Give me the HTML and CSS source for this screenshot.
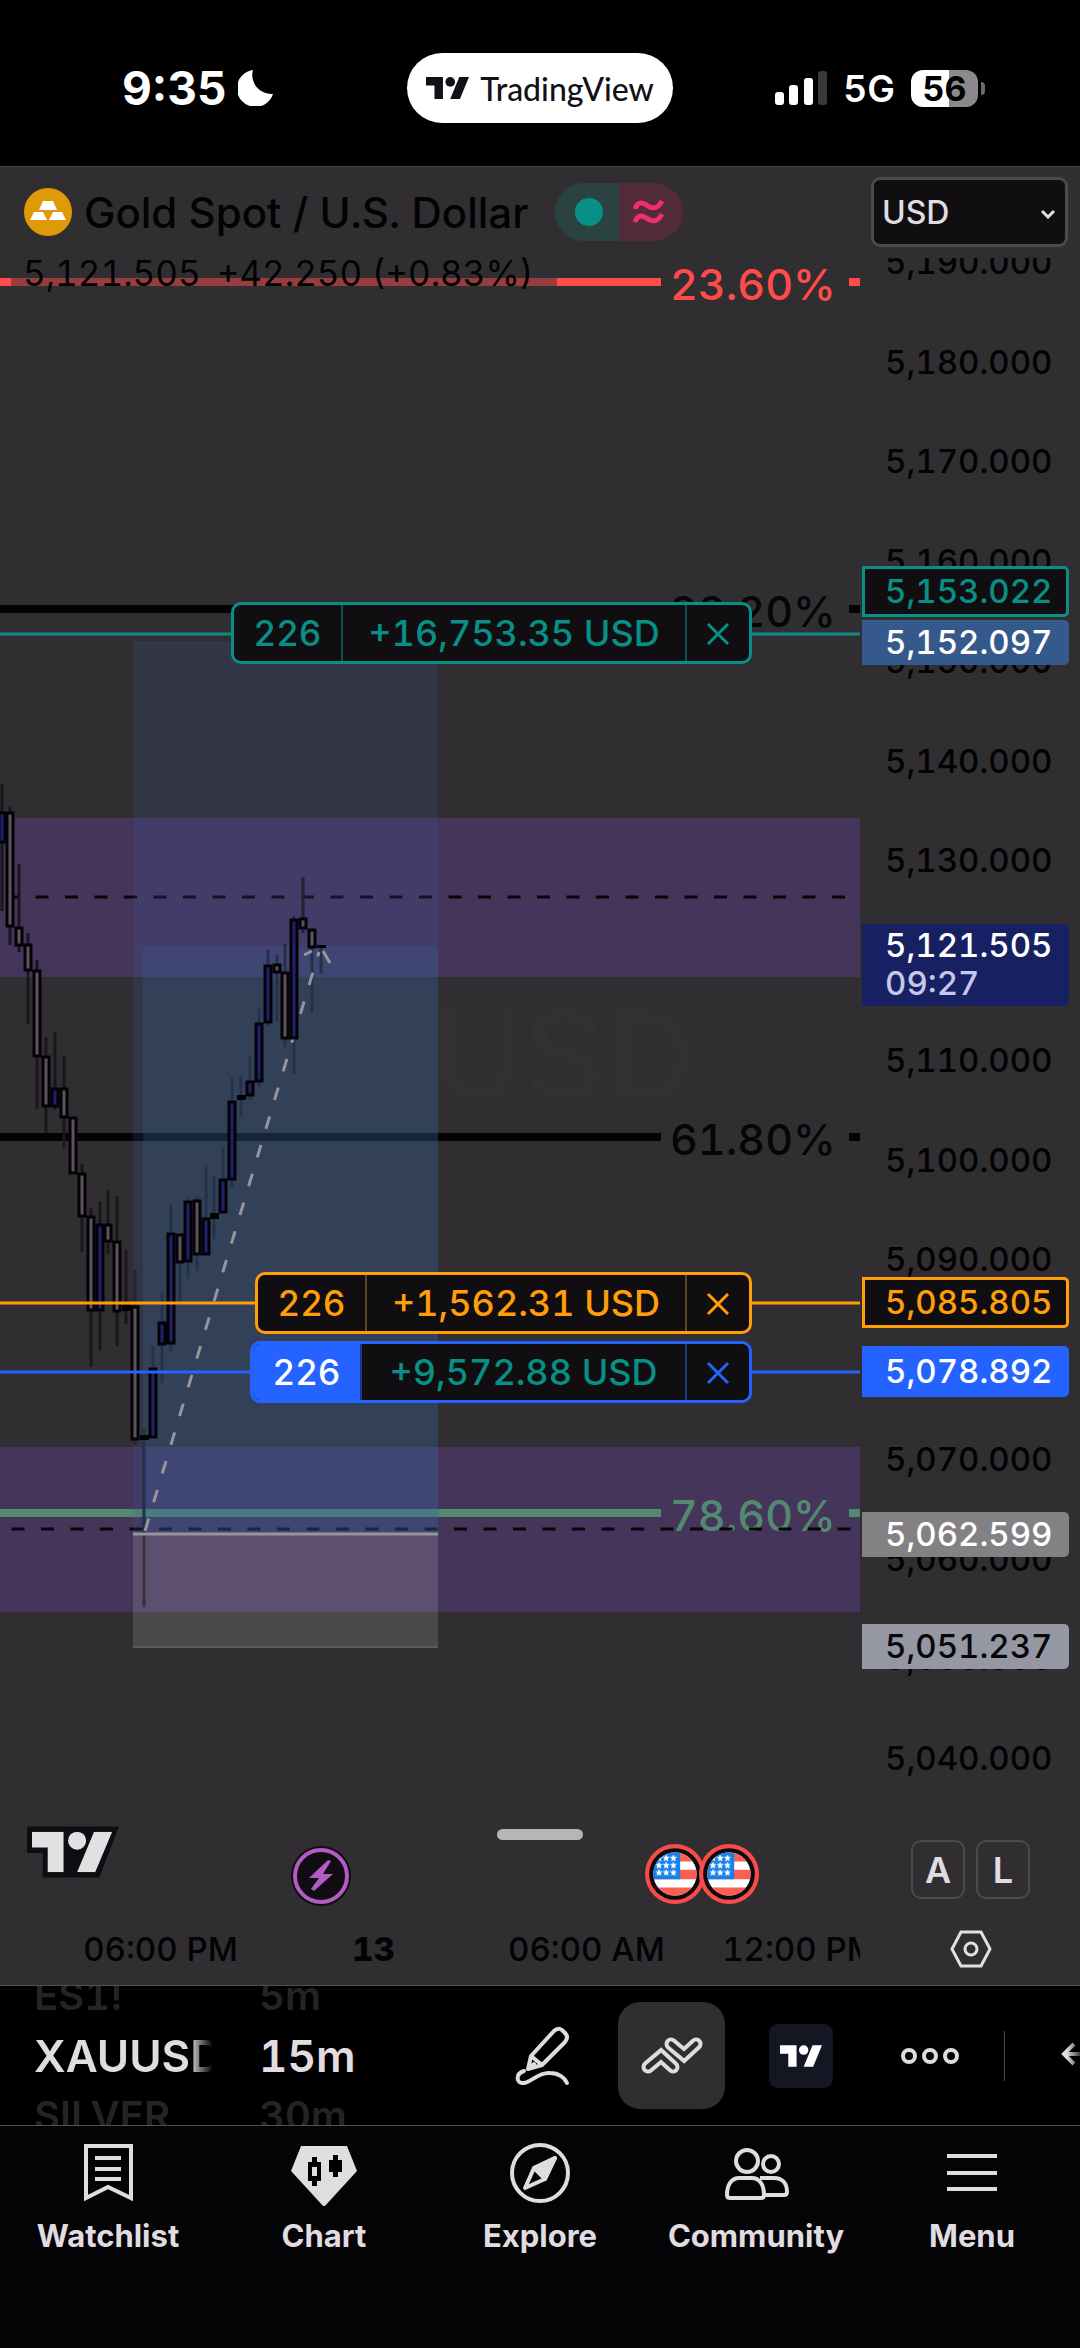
FILE: index.html
```
<!DOCTYPE html>
<html lang="en">
<head>
    <meta charset="utf-8">
    <meta name="viewport" content="width=device-width, initial-scale=1">
    <title>XAUUSD 15m</title>
    <link rel="stylesheet" href="styles.css">
</head>
<body>
    <!-- shared symbols -->
    <svg class="defs" aria-hidden="true">
        <symbol id="tv" viewBox="0 4 35.5 18">
            <path d="M14 22H7V11H0V4h14v18zM28 22h-8l7.5-18h8L28 22z"/>
            <circle cx="20" cy="8" r="4"/>
        </symbol>
        <pattern id="stars" x="10" y="10" width="7" height="7" patternUnits="userSpaceOnUse">
            <path fill="#fff" d="M3.500 0l1 2.300 2.500.200-1.900 1.700.600 2.500-2.200-1.300L1.300 6.700l.600-2.500L0 2.500l2.500-.200z"/>
        </pattern>
        <symbol id="flag" viewBox="0 0 58 58">
            <circle cx="29" cy="29" r="29" fill="#f94c48"/>
            <circle cx="29" cy="29" r="25" fill="#0d0b0f"/>
            <clipPath id="flagClip"><circle cx="29" cy="29" r="21"/></clipPath>
            <g clip-path="url(#flagClip)">
                <path fill="#fff" d="M8 8h42v42H8z"/>
                <path fill="#fb5f52" d="M8 8h42v9H8zM8 25h42v9H8zM8 42h42v9H8z"/>
                <path fill="#1580ee" d="M8 8h26v26H8z"/>
                <path fill="url(#stars)" d="M10 10h21v21H10z"/>
            </g>
        </symbol>
        <symbol id="close" viewBox="0 0 24 24">
            <path d="M2 2l20 20M22 2L2 22" fill="none" stroke="currentColor" stroke-width="3"/>
        </symbol>
    </svg>

    <header class="status">
        <div class="status-left">
            <span class="clock">9:35</span>
            <svg class="moon" viewBox="0 0 36 36"><path fill="#fff" d="M15 0a19 19 0 0 0 20 24A18.500 18.500 0 1 1 15 0z"/></svg>
        </div>
        <div class="island">
            <svg class="island-logo"><use href="#tv"/></svg>
            <span>TradingView</span>
        </div>
        <div class="status-right">
            <svg class="signal" viewBox="0 0 52 34">
                <g fill="#fff">
                    <rect y="21" width="9" height="13" rx="3"/>
                    <rect x="14" y="14" width="9" height="20" rx="3"/>
                    <rect x="29" y="7" width="9" height="27" rx="3"/>
                </g>
                <rect x="43" width="9" height="34" rx="3" fill="#39383a"/>
            </svg>
            <span class="network">5G</span>
            <span class="battery">56</span>
        </div>
    </header>

    <main class="chart">
        <div class="plot">
            <svg class="canvas" viewBox="0 0 860 1747" preserveAspectRatio="xMinYMin slice">
                <text class="watermark" x="427" y="934" text-anchor="middle">XAUUSD</text>
                <g transform="translate(0 -167)">
                    <!-- supply / demand zones -->
                    <path class="zone" d="M0 818h860v159H0zM0 1447h860v165H0z"/>

                    <!-- fib levels -->
                    <path class="fib red" d="M0 282h661M849 282h11"/>
                    <path class="fib" d="M0 609h661M849 609h11M0 1137h661M849 1137h11"/>
                    <path class="fib green" d="M0 1513h661M849 1513h11"/>
                    <text class="fib-text red" x="670" y="300">23.60%</text>
                    <text class="fib-text" x="670" y="627">38.20%</text>
                    <text class="fib-text" x="670" y="1155">61.80%</text>
                    <text class="fib-text green" x="670" y="1531">78.60%</text>
                    <path class="mid" d="M6 897h850M-18 1529h878"/>

                    <path class="wick" d="M2 784V911M10 806V945M19 864V952M28 933V1024M37 960V1109M46 1037V1133M55 1032V1110M64 1056V1148M82 1164V1252M91 1208V1367M100 1201V1350M108 1190V1254M117 1196V1346M126 1250V1324M135 1270V1445M144 1429V1607M153 1346V1438M162 1293V1383M171 1205V1351M180 1234V1302M188 1197V1279M197 1197V1271M206 1165V1255M214 1176V1239M223 1147V1213M232 1078V1187M241 1076V1117M250 1056V1100M259 1008V1087M268 950V1026M277 955V1021M285 944V1047M294 916V1074M303 877V933M312 929V1013M321 945V974"/>

                    <!-- long position -->
                    <path class="profit" d="M133 641h305v892H133z"/>
                    <path class="profit-live" d="M143 946h295v587H143z"/>
                    <path class="risk" d="M133 1533h305v115H133z"/>
                    <path class="entry" d="M133 1534h305"/>
                    <path class="stop" d="M133 1647h305"/>
                    <path class="trend" d="M145 1531L319 952" stroke-dasharray="13 17"/>
                    <path class="trend" d="M304 955l8-4M323 951l7 12"/>

                    <!-- candle bodies -->
                    <path class="down" d="M7 813h6v113h-6zM16 928h6v17h-6zM25 945h6v25h-6zM34 971h6v85h-6zM43 1057h6v49h-6zM61 1089h6v28h-6zM70 1118h6v55h-6zM79 1174h6v42h-6zM88 1217h6v93h-6zM105 1225h6v16h-6zM114 1242h6v69h-6zM132 1307h6v132h-6zM177 1235h6v27h-6zM194 1201h6v53h-6zM274 965h6v7h-6zM282 973h6v65h-6zM300 919h6v9h-6zM309 930h6v17h-6z"/>
                    <path class="up" d="M-1 813h6v29h-6zM52 1089h6v17h-6zM97 1225h6v85h-6zM150 1369h6v68h-6zM159 1323h6v21h-6zM168 1234h6v109h-6zM185 1202h6v59h-6zM203 1219h6v35h-6zM220 1180h6v32h-6zM229 1102h6v77h-6zM247 1082h6v13h-6zM256 1024h6v57h-6zM265 966h6v56h-6zM291 920h6v118h-6z"/>
                    <path d="M122 1305h9v6h-9zM140 1435h9v5h-9zM210 1213h9v6h-9zM237 1095h9v5h-9zM317 945h9v3h-9z"/>

                    <path class="order-line teal" d="M0 634h860"/>
                    <path class="order-line orange" d="M0 1303h860"/>
                    <path class="order-line blue" d="M0 1372h860"/>
                </g>
            </svg>

            <div class="order order-tp">
                <span class="qty">226</span><span class="pnl">+16,753.35 USD</span>
                <button aria-label="Cancel take profit"><svg><use href="#close"/></svg></button>
            </div>
            <div class="order order-sl">
                <span class="qty">226</span><span class="pnl">+1,562.31 USD</span>
                <button aria-label="Cancel stop loss"><svg><use href="#close"/></svg></button>
            </div>
            <div class="order order-pos">
                <span class="qty">226</span><span class="pnl">+9,572.88 USD</span>
                <button aria-label="Close position"><svg><use href="#close"/></svg></button>
            </div>

            <div class="legend">
                <div class="legend-title">
                    <svg class="gold" viewBox="0 0 48 48">
                        <circle cx="24" cy="24" r="24" fill="#df9a09"/>
                        <path fill="#fff" d="M19 13h10l4 9H15zM10 24h9l4 8H6zM29 24h9l4 8H25z"/>
                    </svg>
                    <h1>Gold Spot / U.S. Dollar</h1>
                    <svg class="market" viewBox="0 0 128 58">
                        <path fill="#2a4340" d="M29 0h35v58H29a29 29 0 0 1 0-58z"/>
                        <path fill="#512b3a" d="M64 0h35a29 29 0 0 1 0 58H64z"/>
                        <circle cx="34" cy="29" r="14" fill="#088f86"/>
                        <path fill="none" stroke="#f12f6b" stroke-width="5" d="M80 26c3-9 9-6 13-3s10 3 14-5M80 39c3-9 9-6 13-3s10 3 14-5"/>
                    </svg>
                </div>
                <div class="legend-values"><span>5,121.505</span><span>+42.250 (+0.83%)</span></div>
            </div>

            <svg class="tv-mark" viewBox="0 0 94 52">
                <path fill="#0f0d11" d="M0 0h94L74 52H16V27H0z"/>
                <svg x="5" y="5" width="82" height="42" fill="#e3e0e3"><use href="#tv"/></svg>
            </svg>
            <svg class="event bolt" viewBox="0 0 60 60">
                <circle cx="30" cy="30" r="30" fill="#0f0d11"/>
                <circle cx="30" cy="30" r="26" fill="none" stroke="#b35bc4" stroke-width="4"/>
                <path fill="#b35bc4" d="M37 14L18 32h10l-8 11 3 2 19-17H32l8-13z"/>
            </svg>
            <div class="handle"></div>
            <svg class="event flag-1"><use href="#flag"/></svg>
            <svg class="event flag-2"><use href="#flag"/></svg>
        </div>

        <div class="axis">
            <ul class="ticks">
                <li>5,190.000</li>
                <li>5,180.000</li>
                <li>5,170.000</li>
                <li>5,160.000</li>
                <li>5,150.000</li>
                <li>5,140.000</li>
                <li>5,130.000</li>
                <li>5,120.000</li>
                <li>5,110.000</li>
                <li>5,100.000</li>
                <li>5,090.000</li>
                <li>5,080.000</li>
                <li>5,070.000</li>
                <li>5,060.000</li>
                <li>5,050.000</li>
                <li>5,040.000</li>
            </ul>
            <div class="scale-buttons">
                <button>A</button>
                <button>L</button>
            </div>
            <div class="currency">
                <select aria-label="Currency"><option>USD</option></select>
                <svg viewBox="0 0 16 10"><path fill="none" stroke="#e3e0e3" stroke-width="3" d="M2 2l6 6 6-6"/></svg>
            </div>
            <span class="tag tag-tp">5,153.022</span>
            <span class="tag tag-target">5,152.097</span>
            <span class="tag tag-last">5,121.505<small>09:27</small></span>
            <span class="tag tag-sl">5,085.805</span>
            <span class="tag tag-pos">5,078.892</span>
            <span class="tag tag-entry">5,062.599</span>
            <span class="tag tag-stop">5,051.237</span>
        </div>

        <div class="times">
            <span>06:00 PM</span>
            <b>13</b>
            <span>06:00 AM</span>
            <span>12:00 PM</span>
        </div>
        <button class="chart-settings" aria-label="Chart settings">
            <svg viewBox="0 0 42 38" fill="none" stroke="#e3e0e3" stroke-width="3">
                <path d="M11 2h20l9 17-9 17H11L2 19z"/>
                <circle cx="21" cy="19" r="6"/>
            </svg>
        </button>
    </main>

    <div class="toolbar">
        <div class="wheel symbol-wheel">
            <span>ES1!</span>
            <strong>XAUUSD</strong>
            <span>SILVER</span>
        </div>
        <div class="wheel interval-wheel">
            <span>5m</span>
            <strong>15m</strong>
            <span>30m</span>
        </div>
        <div class="tools">
            <button aria-label="Draw">
                <svg width="56" height="62" viewBox="0 0 56 62" fill="none" stroke="#dfdcdf" stroke-width="4" stroke-linejoin="round" stroke-linecap="round">
                    <path d="M13 44l3-13L39 6q4-4 8-1l3 3q4 4 0 9L27 40zM16 31l11 9M13 44l6-5"/>
                    <path d="M9 46C0 49 1 59 9 58c8-1 14-11 26-10 9 0 15 5 17 10"/>
                </svg>
            </button>
            <button class="active" aria-label="Trade">
                <svg width="62" height="38" viewBox="0 0 62 38" fill="none" stroke-linecap="round">
                    <g stroke="#dfdcdf" stroke-width="13"><path d="M7 30l13-11 12 11"/><path d="M30 7l13 11L55 7"/></g>
                    <g stroke="#302e31" stroke-width="5"><path d="M7 30l13-11 12 11"/><path d="M30 7l13 11L55 7"/></g>
                </svg>
            </button>
            <button aria-label="Broker">
                <span class="broker"><svg><use href="#tv"/></svg></span>
            </button>
            <button aria-label="More">
                <svg width="58" height="16" viewBox="0 0 58 16" fill="none" stroke="#dfdcdf" stroke-width="4">
                    <circle cx="8" cy="8" r="6"/><circle cx="29" cy="8" r="6"/><circle cx="50" cy="8" r="6"/>
                </svg>
            </button>
        </div>
        <button class="undo" aria-label="Undo">
            <svg viewBox="0 0 32 24" fill="none" stroke="#dfdcdf" stroke-width="4"><path d="M13 2L3 12l10 10M3 12h29"/></svg>
        </button>
    </div>

    <nav class="tabs">
        <a href="#watchlist">
            <svg viewBox="0 0 66 66" fill="none" stroke="#e0dde0" stroke-width="4">
                <path d="M11 6h45v52l-23-11-22 11zM20 18h26M20 29h26M20 39h26"/>
            </svg>
            Watchlist
        </a>
        <a href="#chart">
            <svg viewBox="0 0 66 66">
                <path fill="#e0dde0" d="M10 6h46l10 25-33 36L0 31z"/>
                <path d="M17 22h4v-5h5v5h4v19h-4v5h-5v-5h-4zM38 20h4v-5h5v5h4v12h-4v5h-5v-5h-4z"/>
                <path fill="#e0dde0" d="M21 27h5v9h-5z"/>
            </svg>
            Chart
        </a>
        <a href="#explore">
            <svg viewBox="0 0 66 66" fill="none" stroke="#e0dde0" stroke-width="4" stroke-linejoin="round">
                <circle cx="33" cy="33" r="28"/>
                <path d="M48 18L27 28 18 48l20-9z"/>
                <path fill="#e0dde0" d="M48 18L27 28l11 11z"/>
            </svg>
            Explore
        </a>
        <a href="#community">
            <svg viewBox="0 0 66 66" fill="none" stroke="#e0dde0" stroke-width="4" stroke-linejoin="round">
                <circle cx="24" cy="21" r="11"/>
                <circle cx="48" cy="24" r="8"/>
                <path d="M4 55c0-11 5-17 12-17h13c7 0 12 6 12 17 0 2-1 3-3 3H7c-2 0-3-1-3-3zM37 38h14c8 0 13 5 13 14 0 2-1 3-3 3H42"/>
            </svg>
            Community
        </a>
        <a href="#menu">
            <svg viewBox="0 0 66 66" fill="none" stroke="#e0dde0" stroke-width="4">
                <path d="M8 16h50M8 33h50M8 49h50"/>
            </svg>
            Menu
        </a>
    </nav>
</body>
</html>
```
FILE: styles.css
```
* {
    box-sizing: border-box;
}
body {
    margin: 0;
    min-height: 100vh;
    display: flex;
    flex-direction: column;
    background: #000;
    color: #e0dde0;
    font-family: Inter, "Liberation Sans", sans-serif;
    font-variant-numeric: tabular-nums;
    overflow-x: hidden;
}
button {
    padding: 0;
    border: none;
    background: none;
    color: inherit;
    font: inherit;
    cursor: pointer;
}
.defs {
    position: absolute;
    width: 0;
    height: 0;
}

/* status bar */
.status {
    display: flex;
    align-items: center;
    height: 167px;
    padding: 10px 95px 0;
    color: #fff;
    border-bottom: 1px solid #454347;
}
.status-left,
.status-right {
    flex: 1;
    display: flex;
    align-items: center;
}
.clock {
    margin-left: 27px;
    font-size: 46px;
    font-weight: 700;
    font-variant-numeric: normal;
}
.moon {
    width: 36px;
    height: 36px;
    margin-left: 12px;
}
.island {
    display: flex;
    align-items: center;
    gap: 11px;
    height: 70px;
    padding: 0 19px;
    border-radius: 35px;
    background: #fff;
    color: #131118;
    font-family: Lato, sans-serif;
    font-size: 32px;
    font-weight: 500;
}
.island-logo {
    width: 43px;
    height: 22px;
    fill: #131118;
}
.status-right {
    justify-content: flex-end;
}
.signal {
    width: 52px;
    height: 34px;
}
.network {
    margin: 0 16px;
    font-size: 37px;
    font-weight: 600;
}
.battery {
    position: relative;
    width: 67px;
    height: 37px;
    margin-right: 7px;
    border-radius: 12px;
    background: linear-gradient(90deg, #fff 56%, #8b898c 56%);
    color: #000;
    font-size: 34px;
    font-weight: 700;
    line-height: 37px;
    text-align: center;
}
.battery::after {
    content: "";
    position: absolute;
    top: 12px;
    right: -7px;
    width: 4px;
    height: 13px;
    border-radius: 0 4px 4px 0;
    background: #6d6b6e;
}

/* chart */
.chart {
    flex: 1;
    display: grid;
    grid-template-columns: 1fr 218px;
    grid-template-rows: 1fr 72px;
    column-gap: 2px;
    background: #302e31;
    border-bottom: 1px solid #514f52;
}
.plot {
    position: relative;
    overflow: hidden;
}
.canvas {
    position: absolute;
    width: 100%;
    height: 100%;
}
.watermark {
    font-size: 126px;
    font-weight: 600;
    fill: #323033;
}
.zone {
    fill: #46355b;
}
.fib {
    stroke: #030205;
    stroke-width: 8;
}
.fib.red {
    stroke: #ff4c4a;
}
.fib.green {
    stroke: #528a71;
}
.fib-text {
    font-size: 43px;
    font-weight: 500;
    fill: #060508;
}
.fib-text.red {
    fill: #ff4c4a;
}
.fib-text.green {
    fill: #528a71;
}
.mid {
    stroke: #060508;
    stroke-width: 3;
    stroke-dasharray: 13 16.500;
}
.wick {
    stroke: #19171b;
    stroke-width: 3;
}
.down,
.up {
    stroke: #040207;
    stroke-width: 3;
    fill: #5b555b;
}
.up {
    fill: #20206c;
}
.profit {
    fill: rgba(60, 90, 160, .2);
}
.profit-live {
    fill: rgba(50, 110, 160, .2);
}
.risk {
    fill: rgba(255, 255, 255, .13);
}
.entry {
    stroke: #99949a;
    stroke-width: 3;
}
.stop {
    stroke: #5c5a5d;
    stroke-width: 2;
}
.trend {
    stroke: #98949a;
    stroke-width: 3;
}
.order-line {
    stroke-width: 3;
}
.teal {
    stroke: #088f86;
}
.orange {
    stroke: #ff9d0a;
}
.blue {
    stroke: #2463ff;
}

/* order labels */
.order {
    position: absolute;
    right: 108px;
    display: flex;
    height: 62px;
    border: 3px solid;
    border-radius: 10px;
    overflow: hidden;
    background: #100e11;
    font-size: 35px;
    font-weight: 500;
    line-height: 57px;
    text-align: center;
}
.order .qty {
    width: 107px;
}
.order .pnl {
    flex: 1;
    border: solid;
    border-width: 0 2px;
    font-size: 36px;
}
.order button {
    width: 62px;
}
.order button svg {
    width: 24px;
    height: 24px;
}
.order-tp {
    top: 435px;
    width: 521px;
    color: #088f86;
}
.order-tp .pnl {
    border-color: #0a5450;
}
.order-sl {
    top: 1105px;
    width: 497px;
    color: #ff9d0a;
}
.order-sl .pnl {
    border-color: #5f4526;
}
.order-pos {
    top: 1174px;
    width: 502px;
    color: #088f86;
    border-color: #2463ff;
}
.order-pos .qty {
    background: #2463ff;
    color: #fff;
}
.order-pos .pnl {
    border-color: #2463ff #1b3a86;
}
.order-pos button {
    color: #2463ff;
}

/* legend */
.legend {
    position: absolute;
    top: 15px;
    left: 11px;
    color: #030204;
}
.legend-title {
    display: flex;
    align-items: center;
    height: 60px;
    padding-left: 13px;
}
.legend h1 {
    margin: 0 27px 0 12px;
    font-size: 42px;
    font-weight: 500;
    white-space: nowrap;
}
.gold {
    width: 48px;
    height: 48px;
}
.market {
    width: 128px;
    height: 58px;
}
.legend-values {
    display: flex;
    gap: 16px;
    width: 546px;
    margin-top: 8px;
    padding-left: 12px;
    background: rgba(48, 46, 49, .5);
    font-size: 35px;
    line-height: 46px;
    white-space: nowrap;
}

/* things pinned to the bottom of the plot */
.tv-mark {
    position: absolute;
    bottom: 35px;
    left: 27px;
    width: 92px;
    height: 52px;
}
.event {
    position: absolute;
    bottom: 9px;
    width: 60px;
    height: 60px;
}
.bolt {
    left: 291px;
    bottom: 7px;
}
.flag-1 {
    left: 645px;
}
.flag-2 {
    left: 699px;
}
.handle {
    position: absolute;
    bottom: 73px;
    left: 497px;
    width: 86px;
    height: 11px;
    border-radius: 6px;
    background: #b8b5b8;
}

/* price axis */
.axis {
    position: relative;
    display: flex;
    flex-direction: column;
    padding-top: 45px;
}
.ticks {
    flex: 1;
    display: flex;
    flex-direction: column;
    margin: 0;
    padding: 0 0 0 23px;
    list-style: none;
    color: #030204;
    font-size: 33px;
    font-weight: 500;
}
.ticks li {
    flex: 1;
    display: flex;
    align-items: center;
}
.scale-buttons {
    display: flex;
    gap: 11px;
    margin: 32px 0 14px 49px;
}
.scale-buttons button {
    width: 54px;
    height: 59px;
    border: 2px solid #4c4a4d;
    border-radius: 10px;
    font-size: 36px;
    font-weight: 600;
}
.currency {
    position: absolute;
    top: 0;
    left: 0;
    right: 0;
    padding: 10px 12px 11px 9px;
    background: #302e31;
}
.currency select {
    display: block;
    width: 100%;
    height: 70px;
    padding: 0 8px;
    appearance: none;
    border: 3px solid #4c4a4d;
    border-radius: 9px;
    background: #100e11;
    color: #e0dde0;
    font: 500 32px Inter, sans-serif;
}
.currency svg {
    position: absolute;
    top: 42px;
    right: 24px;
    width: 16px;
    height: 10px;
}
.tag {
    position: absolute;
    left: 0;
    right: 11px;
    padding-left: 23px;
    border-radius: 0 5px 5px 0;
    color: #fff;
    font-size: 33px;
    font-weight: 500;
    line-height: 44px;
    padding-bottom: 1px;
}
.tag-tp,
.tag-sl {
    padding-left: 20px;
    border: 3px solid;
    background: #100e11;
}
.tag-tp {
    top: 399px;
    color: #088f86;
}
.tag-target {
    top: 453px;
    background: #36598b;
}
.tag-last {
    top: 757px;
    padding-top: 2px;
    padding-bottom: 4px;
    background: #182064;
    line-height: 38px;
}
.tag-last small {
    display: block;
    color: #c5c8e6;
    font-size: 33px;
}
.tag-sl {
    top: 1110px;
    color: #ff9d0a;
}
.tag-pos {
    top: 1179px;
    background: #2463ff;
    line-height: 50px;
}
.tag-entry {
    top: 1345px;
    background: #838184;
}
.tag-stop {
    top: 1457px;
    background: #9597a3;
    color: #08070a;
}

/* time axis */
.times {
    display: flex;
    align-items: center;
    padding-left: 54px;
    overflow: hidden;
    color: #030204;
    font-size: 33px;
    font-weight: 500;
    white-space: nowrap;
}
.times > * {
    flex: 0 0 213px;
    text-align: center;
}
.times b {
    font-weight: 800;
}
.chart-settings svg {
    display: block;
    width: 42px;
    height: 38px;
    margin: 0 auto;
}

/* toolbar */
.toolbar {
    display: flex;
    height: 140px;
    border-bottom: 1px solid #514f52;
    overflow: hidden;
}
.wheel {
    flex: none;
    display: flex;
    flex-direction: column;
    justify-content: center;
    height: 139px;
    overflow: hidden;
    font-weight: 600;
    line-height: 60px;
}
.wheel span {
    color: #252327;
    font-size: 40px;
}
.wheel strong {
    font-size: 44px;
    font-weight: 600;
}
.symbol-wheel {
    width: 179px;
    margin-left: 34px;
    -webkit-mask-image: linear-gradient(90deg, #000 155px, transparent 179px);
    mask-image: linear-gradient(90deg, #000 155px, transparent 179px);
}
.interval-wheel {
    width: 230px;
    margin-left: 46px;
}
.tools {
    display: flex;
    gap: 22px;
    align-items: center;
}
.tools button {
    display: flex;
    align-items: center;
    justify-content: center;
    width: 107px;
    height: 107px;
    border-radius: 22px;
}
.tools .active {
    background: #302e31;
}
.broker {
    display: flex;
    align-items: center;
    justify-content: center;
    width: 64px;
    height: 64px;
    border-radius: 9px;
    background: #151624;
}
.broker svg {
    width: 42px;
    height: 22px;
    fill: #fff;
}
.undo {
    flex: none;
    align-self: center;
    height: 50px;
    margin-left: 21px;
    padding-left: 56px;
    border-left: 1px solid #4c4a4d;
}
.undo svg {
    display: block;
    width: 32px;
    height: 24px;
    margin-top: -4px;
    -webkit-mask-image: linear-gradient(90deg, #000 6px, transparent 24px);
    mask-image: linear-gradient(90deg, #000 6px, transparent 24px);
}

/* tab bar */
.tabs {
    display: flex;
    height: 222px;
    padding-top: 14px;
    background: #040306;
}
.tabs a {
    flex: 1 1 0;
    display: flex;
    flex-direction: column;
    align-items: center;
    gap: 12px;
    color: #e0dde0;
    font-size: 31px;
    font-weight: 700;
    line-height: 36px;
    text-decoration: none;
}
.tabs svg {
    width: 66px;
    height: 66px;
}
```
